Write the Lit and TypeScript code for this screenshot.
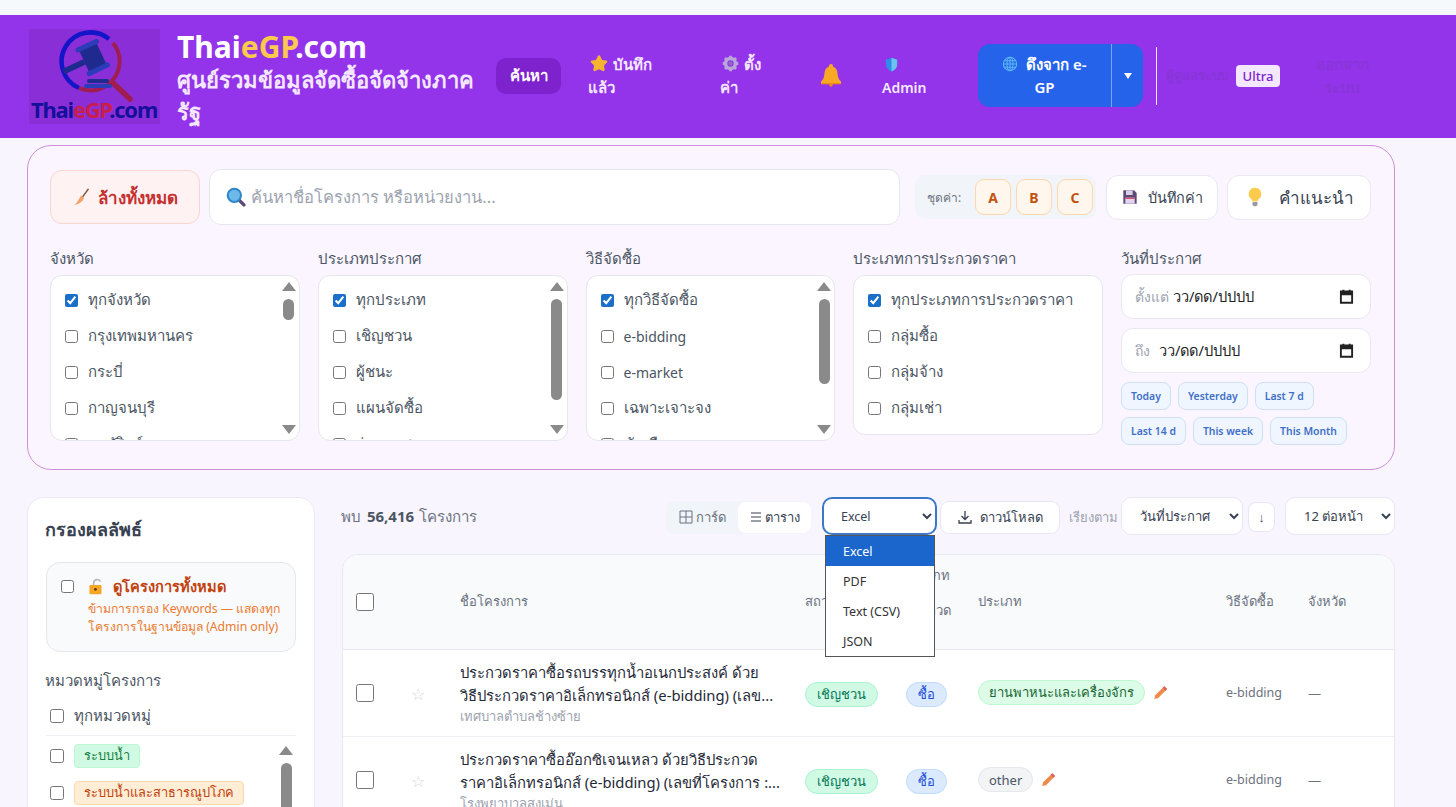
import { LitElement, html, css, svg } from "lit";
import { customElement } from "lit/decorators.js";

const star = svg`<path d="M12 1.500c.7 0 1.200.5 1.500 1.100l2.600 5.300 5.500.8c1.500.2 2 1.700 1 2.700l-4 4 .9 5.700c.2 1.400-1.200 2.400-2.400 1.700L12 20.200l-5.100 2.600c-1.200.7-2.600-.3-2.400-1.700l.9-5.700-4-4c-1-1-.5-2.500 1-2.700l5.500-.8 2.600-5.300c.3-.6.8-1.100 1.500-1.100z" fill="#f5b32e"/>`;
const gear = svg`<circle cx="12" cy="12" r="7" fill="none" stroke="#b9a7d8" stroke-width="5"/><g stroke="#b9a7d8" stroke-width="4"><path d="M12 1v5M12 18v5M1 12h5M18 12h5M4.200 4.200l3.500 3.500M16.300 16.300l3.500 3.500M19.800 4.200l-3.500 3.500M7.700 16.300l-3.500 3.500"/></g><circle cx="12" cy="12" r="3" fill="#8f6bc4"/>`;
const bell = svg`<path d="M12 1c-1.200 0-2 .8-2 2v.6C6.800 4.700 5.600 7.600 5.400 11c-.2 3.500-1.200 5.600-3.400 7.500V20h20v-1.500c-2.200-1.900-3.200-4-3.400-7.500-.2-3.400-1.400-6.300-4.600-7.400V3c0-1.200-.8-2-2-2z" fill="#f9a826"/><path d="M2 20h20v1.300H2z" fill="#ef8a17"/><circle cx="12" cy="22" r="1.800" fill="#ef8a17"/>`;
const shield = svg`<path d="M12 1l9 3.500v7c0 5.500-3.700 9.700-9 11.500-5.300-1.800-9-6-9-11.500v-7z" fill="#2f8be6"/><path d="M12 1l9 3.500v7c0 5.500-3.700 9.700-9 11.500z" fill="#6cc2ee"/>`;
const globe = svg`<g fill="none" stroke="#5cb8f5" stroke-width="1.600"><circle cx="12" cy="12" r="10"/><ellipse cx="12" cy="12" rx="4.500" ry="10"/><path d="M2 12h20M3.500 7h17M3.500 17h17M12 2v20"/></g>`;
const broom = svg`<path d="M22 1l-8 11" stroke="#7a5a44" stroke-width="1.800" fill="none"/><path d="M12 10l4 3c-1 4-5 8-13 10 3-3 6-7 9-13z" fill="#f2a36b"/>`;
const glass = svg`<path d="M15 15l6.500 6.500" stroke="#5b4a78" stroke-width="4" stroke-linecap="round"/><circle cx="10" cy="10" r="8" fill="#6db9ea" stroke="#2f86c9" stroke-width="2.500"/>`;
const floppy = svg`<path d="M2 2h16l4 4v16H2z" fill="#5b4a78"/><path d="M6 2h10v7H6z" fill="#d9cfe8"/><path d="M5 13h14v9H5z" fill="#e3d5ee"/><path d="M5 13h14v2H5z" fill="#dc4f6c"/>`;
const bulb = svg`<path d="M12 1a7.500 7.500 0 0 0-4.500 13.500c1 .9 1.300 2 1.500 3h6c.2-1 .5-2.100 1.500-3A7.500 7.500 0 0 0 12 1z" fill="#fbcb4e"/><path d="M9 18h6v3.500l-1.500 1.500h-3L9 21.500z" fill="#9a9aa6"/>`;
const lock = svg`<path d="M8 11V7a5 5 0 0 1 9.500-2" fill="none" stroke="#b7b7c0" stroke-width="2.400"/><rect x="2" y="10" width="17" height="13" rx="1.500" fill="#f5a623"/><circle cx="10.500" cy="16" r="2" fill="#5c3a12"/>`;
const pencil = svg`<path d="M18 2l4.500 4.500L8 21l-6 1.500L3.500 16.500z" fill="#ee8a4a"/><path d="M18 2l4.500 4.500-2.500 2.500L15.500 4.500z" fill="#dc5f5f"/>`;
const calendar = svg`<path d="M3 4h18v18H3z" fill="none" stroke="#222" stroke-width="3"/><path d="M3 4h18v6H3z" fill="#222"/><path d="M7 1v4M17 1v4" stroke="#222" stroke-width="3"/>`;

const ic = (p: unknown, size = 16, cls = "") => html`<svg class="ic ${cls}" width=${size} height=${size} viewBox="0 0 24 24">${p}</svg>`;

interface Col { label: string; items: string[]; thumb?: number; }
const cols: Col[] = [
  { label: "จังหวัด", items: ["ทุกจังหวัด", "กรุงเทพมหานคร", "กระบี่", "กาญจนบุรี", "กาฬสินธุ์"], thumb: 21 },
  { label: "ประเภทประกาศ", items: ["ทุกประเภท", "เชิญชวน", "ผู้ชนะ", "แผนจัดซื้อ", "ร่างเอกสาร"], thumb: 101 },
  { label: "วิธีจัดซื้อ", items: ["ทุกวิธีจัดซื้อ", "e-bidding", "e-market", "เฉพาะเจาะจง", "คัดเลือก"], thumb: 85 },
  { label: "ประเภทการประกวดราคา", items: ["ทุกประเภทการประกวดราคา", "กลุ่มซื้อ", "กลุ่มจ้าง", "กลุ่มเช่า"] },
];

const arrowUp = html`<svg class="sb-arrow" width="14" height="9" viewBox="0 0 14 9"><path d="M7 0l7 9H0z" fill="#8a8a8a"/></svg>`;
const arrowDown = html`<svg class="sb-arrow" width="14" height="9" viewBox="0 0 14 9"><path d="M0 0h14L7 9z" fill="#8a8a8a"/></svg>`;
const scrollbar = (thumb: number) => html`<div class="sb">${arrowUp}<div class="sb-track"><div class="sb-thumb" style="height:${thumb}px"></div></div>${arrowDown}</div>`;

const rows = [
  { name: "ประกวดราคาซื้อรถบรรทุกน้ำอเนกประสงค์ ด้วย", name2: "วิธีประกวดราคาอิเล็กทรอนิกส์ (e-bidding) (เลข...", org: "เทศบาลตำบลช้างซ้าย", cat: "ยานพาหนะและเครื่องจักร", catCls: "cat-green" },
  { name: "ประกวดราคาซื้ออ๊อกซิเจนเหลว ด้วยวิธีประกวด", name2: "ราคาอิเล็กทรอนิกส์ (e-bidding) (เลขที่โครงการ :...", org: "โรงพยาบาลสงเม่น", cat: "other", catCls: "cat-gray" },
];

@customElement("app-root")
export class AppRoot extends LitElement {
  static styles = css`
    :host { display: block; height: 807px; overflow: hidden; background: #f8f5fe; font-family: "Noto Sans", sans-serif; color: #374151; font-size: 15px; }
    * { box-sizing: border-box; }
    .ic { display: inline-block; vertical-align: -2px; flex: none; }
    .top-strip { height: 15px; background: #f5f9fc; }
    header { height: 123px; background: #9333ea; display: flex; align-items: center; padding-left: 29px; }
    .logo { width: 131px; height: 95px; background: #8a2fd8; flex: none; margin-right: 17px; display: block; }
    .brand { width: 319px; flex: none; padding-right: 16px; }
    .brand h1 { margin: 2px 0 -2px; font-size: 30px; line-height: 36px; font-weight: 700; color: #fff; }
    .brand h1 span { color: #fbc94c; }
    .brand p { margin: 0; font-size: 22px; line-height: 32px; font-weight: 700; color: #f3e8ff; }
    .hright { display: flex; align-items: center; flex: none; margin-bottom: 2px; }
    .nav { display: flex; align-items: center; flex: none; font-weight: 600; font-size: 15px; line-height: 23px; color: #f3e8ff; }
    .nav-search { width: 65px; height: 36px; background: #7e22ce; border-radius: 10px; display: flex; align-items: center; justify-content: center; color: #fff; margin-right: 27px; }
    .nav-saved { width: 132px; }
    .nav-settings { width: 100px; }
    .nav-bell { width: 62px; display: flex; padding-bottom: 2px; margin-left: -1px; margin-right: 1px; }
    .nav-admin { width: 96px; }
    .nav-admin span { font-size: 14px; }
    .lead { margin-left: 2px; margin-right: 1px; }
    .pull { display: flex; width: 165px; height: 63px; background: #2563eb; border-radius: 12px; color: #fff; font-weight: 600; font-size: 15px; line-height: 23px; flex: none; }
    .pull-main { width: 134px; display: flex; align-items: center; justify-content: center; text-align: center; border-right: 1px solid #7ba4f3; }
    .pull-main .ic { margin-right: 4px; }
    .pull-caret { flex: 1; display: flex; align-items: center; justify-content: center; }
    .sep { width: 1px; height: 58px; background: #f3e8ff; margin: 0 9px 0 13px; flex: none; }
    .role { font-size: 13px; color: #8438d0; margin-right: 8px; flex: none; width: 62px; white-space: nowrap; }
    .ultra { width: 44px; height: 22px; background: #f3e8ff; color: #7e22ce; border-radius: 4px; font-size: 13px; font-weight: 500; display: flex; align-items: center; justify-content: center; flex: none; }
    .logout { margin-left: 32px; width: 60px; font-size: 15px; line-height: 23px; color: #8438d0; text-align: center; flex: none; }

    main { padding: 7px 61px 0 27px; }
    .panel { height: 325px; border: 1px solid #cf8fd6; border-radius: 24px; background: #faf5ff; padding: 23px 23px 0 22px; }
    .row1 { display: flex; align-items: center; height: 56px; }
    .clear { width: 150px; height: 54px; background: #fef2f2; border: 1px solid #fbd5d0; border-radius: 12px; color: #c53030; font-weight: 700; font-size: 17px; display: flex; align-items: center; justify-content: center; gap: 8px; margin-right: 9px; flex: none; }
    .search { width: 691px; height: 56px; background: #fff; border: 1px solid #e5e7eb; border-radius: 12px; display: flex; align-items: center; padding-left: 16px; gap: 5px; color: #9ca3af; font-size: 16.500px; flex: none; margin-right: 15px; }
    .presets { width: 181px; height: 44px; background: #f1f5f9; border-radius: 10px; display: flex; align-items: center; font-size: 12px; color: #6b7280; padding-left: 12px; flex: none; margin-right: 10px; }
    .presets span { width: 48px; flex: none; }
    .preset { width: 36px; height: 36px; background: #fff7ed; border: 1px solid #fed7aa; border-radius: 9px; color: #c2530f; font-weight: 700; font-size: 14px; display: flex; align-items: center; justify-content: center; margin-right: 5px; flex: none; }
    .ghost { height: 45px; background: #fff; border: 1px solid #e9e7f2; border-radius: 12px; display: flex; align-items: center; justify-content: center; color: #374151; flex: none; }
    .save { width: 112px; font-size: 14.400px; gap: 10px; margin-right: 9px; }
    .hint { width: 144px; font-size: 17px; gap: 14px; }
    .filters { display: grid; grid-template-columns: repeat(5, 249.750px); column-gap: 18px; margin-top: 20px; }
    .flabel { height: 26px; font-size: 15px; color: #4b5563; display: flex; align-items: center; line-height: 26px; margin-bottom: 4px; }
    .list { background: #fff; border: 1px solid #e5e7eb; border-radius: 12px; max-height: 166px; display: flex; overflow: hidden; align-items: flex-start; }
    .list-body { flex: 1; padding: 6px 0 8px 14px; min-width: 0; }
    .item { height: 36px; display: flex; align-items: center; gap: 10px; font-size: 15px; color: #4b5563; white-space: nowrap; }
    .item.lat { font-size: 14px; }
    input[type="checkbox"] { margin: 0; width: 13px; height: 13px; accent-color: #1a6fc9; flex: none; }
    .sb { width: 14px; height: 164px; margin-right: 3px; display: flex; flex-direction: column; align-items: center; padding: 6px 0; flex: none; }
    .sb-arrow { flex: none; }
    .sb-track { flex: 1; padding-top: 8px; }
    .sb-thumb { width: 11px; background: #8a8a8a; border-radius: 6px; }
    .date { height: 45px; background: #fff; border: 1px solid #e9e7f2; border-radius: 12px; display: flex; align-items: center; padding: 0 16px 0 13px; gap: 4px; font-size: 14.600px; color: #222; margin-bottom: 9px; }
    .date.first { margin-top: -1px; }
    .date.to { gap: 9px; }
    .date small { font-size: 14px; color: #9ca3af; }
    .date .ic { margin-left: auto; }
    .chips { display: flex; flex-wrap: wrap; gap: 7px 7px; margin-top: 6px; }
    .chip { height: 28px; padding: 0 9px; background: #eff6ff; border: 1px solid #cfe0f5; border-radius: 8px; font-size: 10.400px; font-weight: 600; color: #3f6fc6; display: flex; align-items: center; }

    .content { display: flex; margin-top: 27px; gap: 26px; }
    .side { width: 288px; height: 400px; background: #fff; border: 1px solid #ede9f6; border-radius: 16px; padding: 14px 18px; flex: none; }
    .side h3 { margin: 0 0 16px -1px; font-size: 18px; line-height: 34px; font-weight: 700; color: #374151; }
    .all { height: 90px; border: 1px solid #e5e7eb; background: #f8fafc; border-radius: 14px; display: flex; padding: 12px 0 0 14px; gap: 14px; }
    .all input { margin-top: 5px; }
    .all b { display: flex; align-items: center; gap: 8px; font-size: 14.600px; line-height: 22px; color: #c2410c; font-weight: 700; }
    .all p { margin: 3px 0 0; font-size: 12.200px; line-height: 18px; color: #ea7a30; white-space: nowrap; }
    .sub { font-size: 15px; color: #4b5563; margin: 16px 0 0 -1px; line-height: 24px; }
    .cat-all { height: 39px; margin-top: 5px; display: flex; align-items: center; gap: 10px; padding-left: 4px; color: #4b5563; border-bottom: 1px solid #f1f1f5; }
    .cat-all input, .cat-line input { width: 14px; height: 14px; }
    .cat-wrap { display: flex; justify-content: space-between; padding-top: 1px; }
    .cat-line { height: 37px; display: flex; align-items: center; gap: 10px; padding-left: 4px; }
    .tag { height: 24px; padding: 0 9px; border-radius: 4px; font-size: 12.800px; font-weight: 400; display: flex; align-items: center; }
    .tag-green { background: #d1fae5; border: 1px solid #bbf7d0; color: #15803d; }
    .tag-orange { background: #ffedd5; border: 1px solid #fed7aa; color: #c2410c; }
    .side .sb { margin: 0 3px 0 0; height: 80px; padding-top: 9px; }

    .results { width: 1054px; flex: none; }
    .bar { height: 40px; margin-top: -1px; display: flex; align-items: center; font-size: 14px; }
    .bar > div:not(.exp) { margin-top: 2px; }
    .found { width: 325px; font-size: 15px; color: #6b7280; flex: none; }
    .found b { color: #4b5563; font-weight: 700; font-size: 15px; margin: 0 1px 0 2px; }
    .view { width: 145px; height: 33px; background: #f1f5f9; border-radius: 8px; display: flex; align-items: center; padding-left: 13px; font-size: 13px; color: #6b7280; margin-right: 11px; flex: none; }
    .view .v-card { width: 59px; flex: none; display: flex; align-items: center; gap: 3px; }
    .view .v-table { width: 73px; height: 31px; background: #fff; border-radius: 8px; display: flex; align-items: center; justify-content: center; gap: 3px; color: #374151; flex: none; }
    .exp { position: relative; margin-right: 3px; flex: none; }
    select { font-family: inherit; background: #fff; color: #374151; font-size: 13px; border: 1px solid #e9e7f2; border-radius: 10px; padding: 0 4px 0 14px; height: 38px; display: block; }
    .exp select { width: 115px; border: 2px solid #3b78c8; font-size: 12.500px; padding-left: 13px; }
    .menu { position: absolute; left: 3px; top: 38px; width: 110px; background: #fff; border: 1px solid #555; font-size: 12.500px; color: #333; z-index: 5; }
    .menu div { height: 30px; padding: 0 0 0 17px; display: flex; align-items: center; }
    .menu .on { background: #1a66cc; color: #fff; }
    .dl { width: 120px; height: 33px; background: #fff; border: 1px solid #e9e7f2; border-radius: 9px; display: flex; align-items: center; justify-content: center; gap: 7px; font-size: 13px; color: #374151; flex: none; margin-right: 9px; }
    .sortlbl { font-size: 13px; color: #9ca3af; width: 52px; flex: none; white-space: nowrap; }
    .bar .sort { width: 122px; margin-right: 5px; }
    .arrow { width: 27px; height: 30px; background: #fff; border: 1px solid #e9e7f2; border-radius: 8px; display: flex; align-items: center; justify-content: center; margin-right: 10px; font-size: 13px; color: #4b5563; flex: none; }
    .bar .per { width: 110px; }
    .table { margin-top: 18px; margin-left: 1px; background: #fff; border: 1px solid #e9e7f2; border-radius: 16px 16px 0 0; overflow: hidden; }
    table { border-collapse: collapse; table-layout: fixed; width: 100%; }
    thead th { height: 94px; background: #f8fafc; font-size: 13px; font-weight: 500; color: #6b7280; text-align: left; line-height: 17.500px; padding: 0 0 0 14px; border-bottom: 1px solid #e9e7f2; }
    thead th.th-type { padding-bottom: 17px; }
    tbody td { height: 87px; padding: 0 0 0 14px; border-bottom: 1px solid #f1f1f5; font-size: 12.500px; color: #6b7280; }
    tbody td.pt { padding-top: 3px; }
    tbody td.pn { padding-top: 1px; }
    th.c0, td.c0 { padding-left: 13px; }
    input.bigcheck { width: 18px; height: 18px; display: block; }
    .fav { color: #d1d5db; font-size: 16px; }
    .nm { font-size: 14.800px; line-height: 23px; font-weight: 400; color: #1f2937; white-space: nowrap; }
    .org { font-size: 13px; line-height: 19px; color: #9ca3af; white-space: nowrap; }
    .pill { display: inline-flex; align-items: center; height: 25px; padding: 0 11px; border-radius: 13px; font-size: 13px; font-weight: 400; }
    .p-green { background: #d1fae5; border: 1px solid #a7f3d0; color: #047857; }
    .p-blue { background: #dbeafe; border: 1px solid #bfdbfe; color: #1d4ed8; }
    .cat-green { background: #dcfce7; border: 1px solid #bbf7d0; color: #166534; padding: 0 10px; }
    .cat-gray { background: #f3f4f6; border: 1px solid #e5e7eb; color: #4b5563; padding: 0 10px; }
    .catcell { display: flex; align-items: center; gap: 8px; margin-top: -3px; }
    .dash { font-size: 13px; }
  `;

  private logo() {
    return html`<svg class="logo" viewBox="0 0 131 95">
      <path d="M80 10A29 29 0 1 0 50 59" fill="none" stroke="#1414c8" stroke-width="4.500"/>
      <path d="M84 14A29 29 0 0 1 50 59" fill="none" stroke="#a01d50" stroke-width="4"/>
      <path d="M83 53l18 17" stroke="#a01d50" stroke-width="5.500" stroke-linecap="round"/>
      <g transform="rotate(-25 64 30)">
        <rect x="55" y="17" width="19" height="24" fill="#1f2a8f"/>
        <rect x="52" y="13" width="25" height="5" rx="2" fill="#2a3cb8"/>
        <rect x="52" y="39" width="25" height="5" rx="2" fill="#2a3cb8"/>
        <rect x="32" y="26" width="23" height="6" fill="#1f2a8f"/>
      </g>
      <rect x="58" y="50" width="22" height="4" rx="2" fill="#1f2a8f"/>
      <rect x="55" y="55" width="28" height="4" rx="2" fill="#2a3cb8"/>
      <text x="2" y="89" font-size="22" font-weight="700" letter-spacing="-1.200" fill="#14109a">Thai<tspan fill="#c81e4e">eGP</tspan>.com</text>
    </svg>`;
  }

  private filterCol(c: Col) {
    return html`<div>
      <div class="flabel">${c.label}</div>
      <div class="list">
        <div class="list-body">
          ${c.items.map((t, i) => html`<label class="item ${t.startsWith("e-") ? "lat" : ""}"><input type="checkbox" .checked=${i === 0} />${t}</label>`)}
        </div>
        ${c.thumb ? scrollbar(c.thumb) : ""}
      </div>
    </div>`;
  }

  render() {
    return html`
      <div class="top-strip"></div>
      <header>
        ${this.logo()}
        <div class="brand">
          <h1>Thai<span>eGP</span>.com</h1>
          <p>ศูนย์รวมข้อมูลจัดซื้อจัดจ้างภาครัฐ</p>
        </div>
        <div class="hright">
          <nav class="nav">
            <div class="nav-search">ค้นหา</div>
            <div class="nav-saved">${ic(star, 18, "lead")} บันทึก<br />แล้ว</div>
            <div class="nav-settings">${ic(gear, 17, "lead")} ตั้ง<br />ค่า</div>
            <div class="nav-bell">${ic(bell, 24)}</div>
            <div class="nav-admin">${ic(shield, 15, "lead")}<br /><span>Admin</span></div>
          </nav>
          <div class="pull">
            <div class="pull-main"><span>${ic(globe, 16)} ดึงจาก e-<br />GP</span></div>
            <div class="pull-caret"><svg width="8" height="6" viewBox="0 0 8 6"><path d="M0 0h8L4 6z" fill="#fff"/></svg></div>
          </div>
          <div class="sep"></div>
          <div class="role">ผู้ดูแลระบบ</div>
          <div class="ultra">Ultra</div>
          <div class="logout">ออกจาก<br />ระบบ</div>
        </div>
      </header>
      <main>
        <section class="panel">
          <div class="row1">
            <div class="clear">${ic(broom, 18)}ล้างทั้งหมด</div>
            <div class="search">${ic(glass, 20)}ค้นหาชื่อโครงการ หรือหน่วยงาน...</div>
            <div class="presets"><span>ชุดค่า:</span><div class="preset">A</div><div class="preset">B</div><div class="preset">C</div></div>
            <div class="ghost save">${ic(floppy, 16)}บันทึกค่า</div>
            <div class="ghost hint">${ic(bulb, 20)}คำแนะนำ</div>
          </div>
          <div class="filters">
            ${cols.map((c) => this.filterCol(c))}
            <div>
              <div class="flabel">วันที่ประกาศ</div>
              <div class="date first"><small>ตั้งแต่</small>วว/ดด/ปปปป${ic(calendar, 15)}</div>
              <div class="date to"><small>ถึง</small>วว/ดด/ปปปป${ic(calendar, 15)}</div>
              <div class="chips">
                ${["Today", "Yesterday", "Last 7 d", "Last 14 d", "This week", "This Month"].map((c) => html`<div class="chip">${c}</div>`)}
              </div>
            </div>
          </div>
        </section>
        <div class="content">
          <aside class="side">
            <h3>กรองผลลัพธ์</h3>
            <div class="all">
              <input type="checkbox" />
              <div>
                <b>${ic(lock, 17)}ดูโครงการทั้งหมด</b>
                <p>ข้ามการกรอง Keywords — แสดงทุก<br />โครงการในฐานข้อมูล (Admin only)</p>
              </div>
            </div>
            <div class="sub">หมวดหมู่โครงการ</div>
            <div class="cat-all"><input type="checkbox" />ทุกหมวดหมู่</div>
            <div class="cat-wrap">
              <div>
                <div class="cat-line"><input type="checkbox" /><div class="tag tag-green">ระบบน้ำ</div></div>
                <div class="cat-line"><input type="checkbox" /><div class="tag tag-orange">ระบบน้ำและสาธารณูปโภค</div></div>
              </div>
              <div class="sb">${arrowUp}<div class="sb-track"><div class="sb-thumb" style="height:60px"></div></div></div>
            </div>
          </aside>
          <section class="results">
            <div class="bar">
              <div class="found">พบ <b>56,416</b> โครงการ</div>
              <div class="view">
                <div class="v-card"><svg width="14" height="14" viewBox="0 0 14 14"><path d="M1 1h12v12H1zM7 1v12M1 7h12" fill="none" stroke="#6b7280"/></svg>การ์ด</div>
                <div class="v-table"><svg width="12" height="12" viewBox="0 0 12 12"><path d="M1 2h10M1 6h10M1 10h10" stroke="#374151"/></svg>ตาราง</div>
              </div>
              <div class="exp">
                <select><option>Excel</option><option>PDF</option><option>Text (CSV)</option><option>JSON</option></select>
                <div class="menu"><div class="on">Excel</div><div>PDF</div><div>Text (CSV)</div><div>JSON</div></div>
              </div>
              <div class="dl"><svg width="16" height="16" viewBox="0 0 16 16"><path d="M8 2v8M4.500 7L8 10.500 11.500 7M2 11v3h12v-3" fill="none" stroke="#374151" stroke-width="1.300"/></svg>ดาวน์โหลด</div>
              <div class="sortlbl">เรียงตาม</div>
              <select class="sort"><option>วันที่ประกาศ</option></select>
              <div class="arrow">↓</div>
              <select class="per"><option>12 ต่อหน้า</option></select>
            </div>
            <div class="table">
              <table>
                <colgroup><col style="width:54px" /><col style="width:49px" /><col style="width:345px" /><col style="width:101px" /><col style="width:72px" /><col style="width:248px" /><col style="width:82px" /><col style="width:102px" /></colgroup>
                <thead>
                  <tr>
                    <th class="c0"><input class="bigcheck" type="checkbox" /></th>
                    <th></th>
                    <th>ชื่อโครงการ</th>
                    <th>สถานะ</th>
                    <th class="th-type">ประเภท การ ประกวด</th>
                    <th>ประเภท</th>
                    <th>วิธีจัดซื้อ</th>
                    <th>จังหวัด</th>
                  </tr>
                </thead>
                <tbody>
                  ${rows.map((r) => html`<tr>
                    <td class="c0"><input class="bigcheck" type="checkbox" /></td>
                    <td class="pt"><span class="fav">☆</span></td>
                    <td class="pn"><div class="nm">${r.name}</div><div class="nm">${r.name2}</div><div class="org">${r.org}</div></td>
                    <td class="pt"><span class="pill p-green">เชิญชวน</span></td>
                    <td class="pt"><span class="pill p-blue">ซื้อ</span></td>
                    <td class="pt"><div class="catcell"><span class="pill ${r.catCls}">${r.cat}</span>${ic(pencil, 15)}</div></td>
                    <td>e-bidding</td>
                    <td class="dash">—</td>
                  </tr>`)}
                </tbody>
              </table>
            </div>
          </section>
        </div>
      </main>
    `;
  }
}
